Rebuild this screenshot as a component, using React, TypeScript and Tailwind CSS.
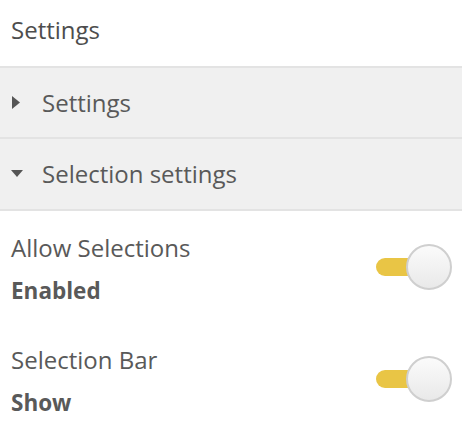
import { useState } from 'react';

function Toggle({ on, onChange }: { on: boolean; onChange: () => void }) {
    return (
        <button onClick={onChange} className="relative w-[78px] h-[48px] shrink-0 mt-[11px]" aria-pressed={on}>
            <span
                className={`absolute left-[1px] top-[15px] w-[48px] h-[18px] rounded-full ${on ? 'bg-[#e9c545]' : 'bg-[#d0d0d0]'}`}
            />
            <span className="absolute right-[1px] top-[1px] w-[46px] h-[46px] rounded-full border-2 border-[#cfcfcf] bg-gradient-to-b from-[#fbfbfb] to-[#e9e9e9]" />
        </button>
    );
}

function Section({ label, open, h }: { label: string; open: boolean; h: string }) {
    return (
        <div className={`flex items-center ${h} pl-[11px] bg-[#f0f0f0] border-b-2 border-[#e3e3e3]`}>
            <span className="w-[31px] flex items-center">
                {open ? (
                    <svg width="12" height="8" viewBox="0 0 12 8">
                        <path d="M0 0h12L6 7z" fill="#555" />
                    </svg>
                ) : (
                    <svg width="9" height="13" viewBox="0 0 9 13">
                        <path d="M1 0l8 6.5L1 13z" fill="#555" />
                    </svg>
                )}
            </span>
            <span className="text-[24px] text-[#595959]">{label}</span>
        </div>
    );
}

export default function App() {
    const [allow, setAllow] = useState(true);
    const [bar, setBar] = useState(true);

    return (
        <div className="w-[462px] h-[427px] bg-white overflow-hidden" style={{ fontFamily: '"Open Sans", sans-serif' }}>
            <div className="h-[68px] pl-[11px] pt-[12px] border-b-2 border-[#e3e3e3] text-[24px] text-[#4d4d4d]">Settings</div>
            <Section label="Settings" open={false} h="h-[71px]" />
            <Section label="Selection settings" open={true} h="h-[72px]" />

            <div className="pl-[11px] pr-[9px] pt-[21px] flex flex-col gap-[37px]">
                <div className="flex items-start justify-between">
                    <div className="flex flex-col">
                        <span className="text-[24px] leading-[32px] text-[#595959]">Allow Selections</span>
                        <span className="text-[22.5px] leading-[32px] font-bold text-[#595959] mt-[11px]">Enabled</span>
                    </div>
                    <Toggle on={allow} onChange={() => setAllow(!allow)} />
                </div>
                <div className="flex items-start justify-between">
                    <div className="flex flex-col">
                        <span className="text-[24px] leading-[32px] text-[#595959]">Selection Bar</span>
                        <span className="text-[22.5px] leading-[32px] font-bold text-[#595959] mt-[11px]">Show</span>
                    </div>
                    <Toggle on={bar} onChange={() => setBar(!bar)} />
                </div>
            </div>
        </div>
    );
}
